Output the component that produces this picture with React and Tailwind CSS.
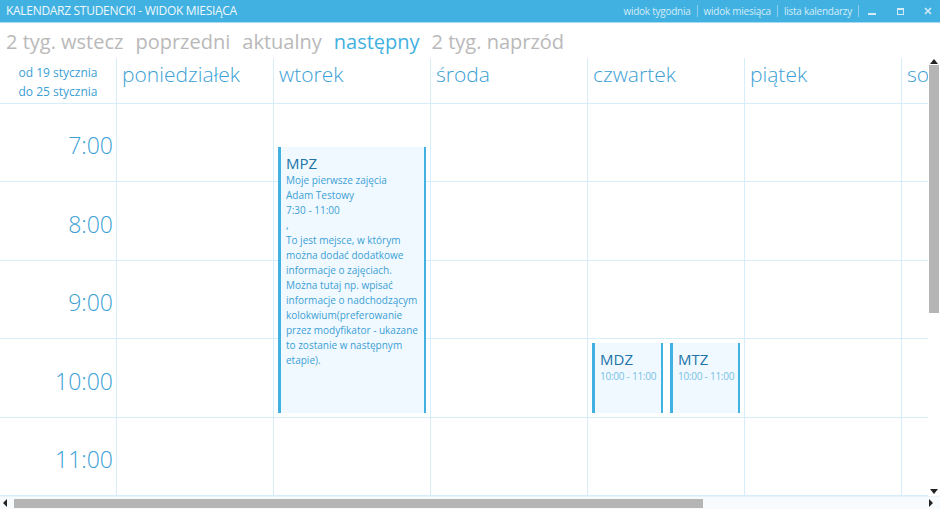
import React from "react";

const days = ["poniedziałek", "wtorek", "środa", "czwartek", "piątek", "sobota"];
const hours = ["7:00", "8:00", "9:00", "10:00", "11:00"];

const mpzLines = [
  "Moje pierwsze zajęcia",
  "Adam Testowy",
  "7:30 - 11:00",
  ",",
];

const Event = ({ title, children, className }) => (
  <div
    className={`absolute bg-[#f0f9ff] border-l-[3px] border-r-2 border-[#41b1e1] pl-[5px] pr-[2px] pt-[6px] overflow-hidden ${className}`}
  >
    <div className="text-[15px] leading-[20px] text-[#2273a6]">{title}</div>
    {children}
  </div>
);

const App = () => {
  return (
    <div
      className="w-[940px] h-[509px] overflow-hidden bg-white flex flex-col"
      style={{ fontFamily: '"Open Sans", "Noto Sans", sans-serif' }}
    >
      {/* title bar */}
      <div className="h-[23px] shrink-0 bg-[#41b1e1] border-b border-[#a9daf2] flex items-center pl-[6px] pr-[8px]">
        <div className="text-[12px] text-[#eef8fd] tracking-tight">KALENDARZ STUDENCKI - WIDOK MIESIĄCA</div>
        <div className="ml-auto flex items-center text-[10px] text-[#d3ecf8] tracking-tight">
          <span>widok tygodnia</span>
          <span className="mx-[6px] w-px h-[12px] bg-[#8fcdee]" />
          <span>widok miesiąca</span>
          <span className="mx-[6px] w-px h-[12px] bg-[#8fcdee]" />
          <span>lista kalendarzy</span>
          <span className="mx-[6px] w-px h-[12px] bg-[#8fcdee]" />
          <span className="ml-[3px] w-[8px] h-[2px] bg-[#d3ecf8] mt-[6px]" />
          <span className="ml-[21px] w-[7px] h-[7px] border border-t-2 border-[#d3ecf8]" />
          <svg className="ml-[20px]" width="8" height="8" viewBox="0 0 8 8">
            <path d="M1 1 L7 7 M7 1 L1 7" stroke="#d3ecf8" strokeWidth="1.6" />
          </svg>
        </div>
      </div>

      {/* nav */}
      <div className="h-[35px] shrink-0 flex items-center gap-[12px] pl-[6px] pt-[2px] text-[20px] text-[#b9b9b9]">
        <span>2 tyg. wstecz</span>
        <span>poprzedni</span>
        <span>aktualny</span>
        <span className="text-[#41b1e1]">następny</span>
        <span>2 tyg. naprzód</span>
      </div>

      {/* main */}
      <div className="flex flex-1 min-h-0">
        <div className="w-[928px] overflow-hidden flex flex-col">
          {/* header row */}
          <div className="flex h-[46px] shrink-0 border-b border-[#d6eef9] w-[1100px]">
            <div className="w-[117px] shrink-0 text-[12px] leading-[19px] text-[#3c9fd5] text-center pt-[5px] border-r border-[#d6eef9]">
              od 19 stycznia
              <br />
              do 25 stycznia
            </div>
            {days.map((d) => (
              <div
                key={d}
                className="w-[157px] shrink-0 border-r border-[#d6eef9] pl-[5px] pt-[1px] text-[21px] text-[#3c9fd5] font-light"
              >
                {d}
              </div>
            ))}
          </div>

          {/* body */}
          <div className="flex w-[1100px] flex-1">
            <div className="w-[117px] shrink-0 border-r border-[#d6eef9]">
              {hours.map((h) => (
                <div
                  key={h}
                  className="h-[78.4px] border-b border-[#d6eef9] flex items-center justify-end pr-[3px] pt-[6px] text-[23px] font-light text-[#3c9fd5]"
                >
                  {h}
                </div>
              ))}
            </div>
            {days.map((d, i) => (
              <div key={d} className="relative w-[157px] shrink-0 border-r border-[#d6eef9]">
                {hours.map((h) => (
                  <div key={h} className="h-[78.4px] border-b border-[#d6eef9]" />
                ))}
                {i === 1 && (
                  <Event title="MPZ" className="left-[4px] w-[148px] top-[43px] h-[266px]">
                    <div className="text-[10px] leading-[15px] text-[#3c9fd5] pr-[4px]">
                      {mpzLines.map((l) => (
                        <div key={l}>{l}</div>
                      ))}
                      <div>
                        To jest mejsce, w którym można dodać dodatkowe informacje o zajęciach. Można tutaj np.
                        wpisać informacje o nadchodzącym kolokwium(preferowanie przez modyfikator - ukazane to
                        zostanie w następnym etapie).
                      </div>
                    </div>
                  </Event>
                )}
                {i === 3 && (
                  <>
                    <Event title="MDZ" className="left-[4px] w-[71px] top-[239px] h-[70px]">
                      <div className="text-[10px] leading-[15px] text-[#79bfe4] whitespace-nowrap tracking-tight">10:00 - 11:00</div>
                    </Event>
                    <Event title="MTZ" className="left-[82px] w-[70px] top-[239px] h-[70px]">
                      <div className="text-[10px] leading-[15px] text-[#79bfe4] whitespace-nowrap tracking-tight">10:00 - 11:00</div>
                    </Event>
                  </>
                )}
              </div>
            ))}
          </div>
        </div>

        {/* vertical scrollbar */}
        <div className="w-[12px] shrink-0 flex flex-col items-center pt-[1px] pb-[2px]">
          <svg width="8" height="5" viewBox="0 0 8 5">
            <path d="M0 5 L4 0 L8 5 Z" fill="#222" />
          </svg>
          <div className="w-[10px] h-[248px] bg-[#b5b5b5] mt-[1px]" />
          <div className="flex-1" />
          <svg width="8" height="5" viewBox="0 0 8 5">
            <path d="M0 0 L4 5 L8 0 Z" fill="#222" />
          </svg>
        </div>
      </div>

      {/* horizontal scrollbar */}
      <div className="h-[13px] shrink-0 bg-[#f8fbfd] border-t border-[#e8f4fa] flex items-center pl-[3px] pr-[7px]">
        <svg width="4" height="8" viewBox="0 0 4 8">
          <path d="M4 0 L0 4 L4 8 Z" fill="#222" />
        </svg>
        <div className="ml-[7px] w-[689px] h-[9px] bg-[#b5b5b5]" />
        <div className="flex-1" />
        <svg width="4" height="8" viewBox="0 0 4 8">
          <path d="M0 0 L4 4 L0 8 Z" fill="#222" />
        </svg>
      </div>
    </div>
  );
};

export default App;
